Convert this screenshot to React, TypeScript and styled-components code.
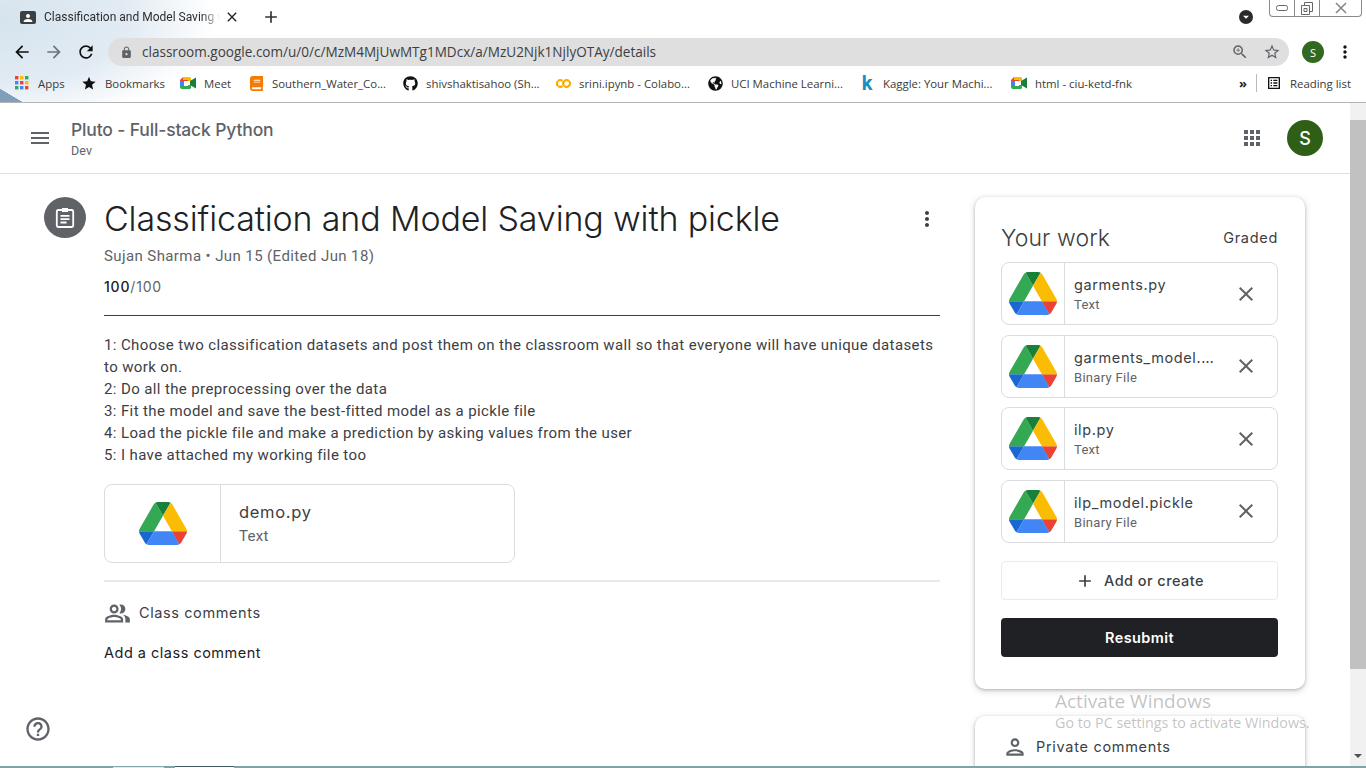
import React from 'react'
import styled, { createGlobalStyle } from 'styled-components'
import {
  MdAdd,
  MdApps,
  MdArrowBack,
  MdArrowDropDown,
  MdArrowForward,
  MdClose,
  MdHelpOutline,
  MdLock,
  MdMenu,
  MdMoreVert,
  MdOutlineListAlt,
  MdOutlinePeopleAlt,
  MdOutlinePerson,
  MdOutlineStarBorder,
  MdRefresh,
  MdStar,
  MdZoomIn,
} from 'react-icons/md'
import { FaBook, FaGithub, FaGlobeAmericas } from 'react-icons/fa'
import { SiGooglecolab } from 'react-icons/si'

const sans = `Inter, "Open Sans", sans-serif`
const body = `Roboto, Arial, sans-serif`
const ui = `"Open Sans", "Noto Sans", sans-serif`

const GlobalStyle = createGlobalStyle`
  html, body {
    margin: 0;
    padding: 0;
    height: 100%;
    overflow: hidden;
    background: #fff;
  }
  * { box-sizing: border-box; }
`

const Page = styled.div`
  position: relative;
  display: flex;
  flex-direction: column;
  width: 1366px;
  height: 768px;
  overflow: hidden;
  background: #fff;
`

/* browser frame */
const BrowserFrame = styled.div`
  flex: none;
  height: 103px;
  border-bottom: 1px solid #b4b4b4;
  background:
    linear-gradient(to top right, #7f9fbd 50%, transparent 52%) 0 100% / 22px 13px no-repeat,
    radial-gradient(ellipse 215px 105px at 0 20px, #d6e4ee 0, #e2ebf3 60%, transparent 100%),
    #fff;
`

const TabStrip = styled.div`
  display: flex;
  align-items: center;
  height: 34px;
  padding-left: 20px;
`

const TabFavicon = styled.svg`
  flex: none;
  display: block;
`

const TabTitle = styled.div`
  width: 176px;
  margin-left: 8px;
  overflow: hidden;
  white-space: nowrap;
  font: 12px ${body};
  color: #2d2d2d;
  -webkit-mask-image: linear-gradient(90deg, #000 90%, transparent 100%);
  mask-image: linear-gradient(90deg, #000 90%, transparent 100%);
`

const TabClose = styled.div`
  display: flex;
  margin-left: 4px;
  color: #222;
  font-size: 16px;
`

const NewTab = styled.div`
  display: flex;
  margin-left: 21px;
  color: #333;
  font-size: 20px;
`

const TabSpacer = styled.div`
  flex: 1;
`

const ProfileDrop = styled.div`
  display: flex;
  align-items: center;
  justify-content: center;
  width: 14px;
  height: 14px;
  margin-right: 16px;
  border-radius: 50%;
  background: #2b2b2b;
  color: #fff;
  font-size: 14px;
`

const WindowControls = styled.div`
  display: flex;
  align-self: flex-start;
  width: 93px;
  height: 17px;
  margin-right: 4px;
  border: 1px solid #8a8a8a;
  border-top: 0;
  border-radius: 0 0 4px 4px;
  background: #fff;
`

const WindowButton = styled.div<{ $width: number; $last?: boolean }>`
  display: flex;
  align-items: center;
  justify-content: center;
  width: ${props => props.$width}px;
  border-right: ${props => (props.$last ? '0' : '1px solid #8a8a8a')};
`

const Toolbar = styled.div`
  display: flex;
  align-items: center;
  height: 36px;
  padding-left: 12px;
`

const NavButton = styled.div<{ $muted?: boolean }>`
  display: flex;
  width: 20px;
  margin-right: 12px;
  color: ${props => (props.$muted ? '#6f7377' : '#111')};
  font-size: 20px;
`

const AddressBar = styled.div`
  display: flex;
  align-items: center;
  width: 1181px;
  height: 28px;
  padding-left: 12px;
  border-radius: 14px;
  background: #dfdfdf;
`

const LockIcon = styled.div`
  display: flex;
  color: #5f6368;
  font-size: 13px;
`

const UrlText = styled.div`
  flex: 1;
  margin-left: 9px;
  font: 13.55px ${ui};
  color: #3c4043;
`

const AddressAction = styled.div<{ $gap: number }>`
  display: flex;
  margin-right: ${props => props.$gap}px;
  color: #5f6368;
  font-size: 18px;
`

const ChromeAvatar = styled.div`
  display: flex;
  align-items: center;
  justify-content: center;
  width: 22px;
  height: 22px;
  margin-left: 13px;
  border-radius: 50%;
  background: #33691e;
  color: #fff;
  font: 11px ${ui};
`

const ChromeMenu = styled.div`
  display: flex;
  margin-left: 11px;
  color: #111;
  font-size: 20px;
`

const BookmarkBar = styled.div`
  display: flex;
  align-items: center;
  height: 28px;
  padding: 0 0 2px 14px;
`

const Bookmark = styled.div<{ $gap: number }>`
  display: flex;
  align-items: center;
  margin-right: ${props => props.$gap}px;
`

const BookmarkIcon = styled.div<{ $color?: string; $size?: number }>`
  display: flex;
  align-items: center;
  justify-content: center;
  width: 16px;
  height: 16px;
  color: ${props => props.$color || '#111'};
  font-size: ${props => props.$size || 15}px;
`

const KaggleMark = styled.span`
  font: 700 20px/16px ${body};
  color: #1b8fc2;
`

const BookmarkLabel = styled.div<{ $width: number }>`
  width: ${props => props.$width}px;
  margin-left: 8px;
  white-space: nowrap;
  font: 11.4px ${ui};
  color: #3a3a3a;
`

const BookmarkSpacer = styled.div`
  flex: 1;
`

const Chevrons = styled.div`
  font: 700 13px ${ui};
  color: #222;
`

const BarDivider = styled.div`
  width: 1px;
  height: 18px;
  margin: 0 9px 0 9px;
  background: #bbb;
`

const ColorDots = styled.svg`
  display: block;
`

/* classroom */
const ClassroomArea = styled.div`
  flex: 1;
  display: flex;
  min-height: 0;
`

const Content = styled.div`
  flex: 1;
  display: flex;
  flex-direction: column;
  min-width: 0;
`

const ClassHeader = styled.header`
  flex: none;
  display: flex;
  align-items: center;
  height: 71px;
  padding: 0 27px 0 28px;
  border-bottom: 1px solid #e0e0e0;
`

const HeaderMenu = styled.div`
  display: flex;
  color: #5f6368;
  font-size: 24px;
`

const ClassTitles = styled.div`
  flex: 1;
  margin-left: 19px;
  padding-top: 1px;
`

const ClassName = styled.div`
  font: 500 17.5px/22px ${sans};
  color: #5f6368;
  letter-spacing: -0.15px;
`

const ClassSection = styled.div`
  margin-top: 2px;
  font: 12.5px/16px ${body};
  color: #5f6368;
  letter-spacing: 0.1px;
`

const HeaderApps = styled.div`
  display: flex;
  color: #5f6368;
  font-size: 24px;
`

const HeaderAvatar = styled.div`
  display: flex;
  align-items: center;
  justify-content: center;
  width: 36px;
  height: 36px;
  margin-left: 23px;
  border-radius: 50%;
  background: #2f5f17;
  color: #fff;
  font: 500 18px ${sans};
`

const Columns = styled.div`
  flex: 1;
  display: flex;
  min-height: 0;
  padding: 23px 0 0 44px;
  overflow: hidden;
`

const AssignmentBadge = styled.div`
  flex: none;
  display: flex;
  align-items: center;
  justify-content: center;
  width: 42px;
  height: 41px;
  border-radius: 50%;
  background: #5f6368;
`

const Main = styled.main`
  flex: none;
  width: 836px;
  margin-left: 18px;
`

const TitleRow = styled.div`
  display: flex;
  align-items: center;
  justify-content: space-between;
  height: 44px;
`

const Title = styled.h1`
  margin: 0;
  font: 300 34px/44px ${sans};
  color: #202124;
  letter-spacing: -0.14px;
  white-space: nowrap;
`

const MoreButton = styled.div`
  display: flex;
  margin-right: 1px;
  color: #3c4043;
  font-size: 24px;
`

const Meta = styled.div`
  margin-top: 5px;
  font: 15px/20px ${body};
  color: #5f6368;
  letter-spacing: 0.4px;
`

const Points = styled.div`
  margin-top: 11px;
  padding-bottom: 18px;
  border-bottom: 1px solid #3c4043;
  font: 14px/20px ${sans};
  color: #5f6368;
  letter-spacing: 0.8px;
  strong {
    font-weight: 500;
    color: #202124;
  }
`

const Description = styled.div`
  margin-top: 18px;
  font: 15px/22px ${body};
  color: #3c4043;
  letter-spacing: 0.385px;
`

const AttachmentCard = styled.div<{ $large?: boolean }>`
  display: flex;
  width: ${props => (props.$large ? '411px' : '277px')};
  height: ${props => (props.$large ? '79px' : '63px')};
  border: 1px solid #dadce0;
  border-radius: 8px;
  background: #fff;
`

const DemoWrap = styled.div`
  margin-top: 18px;
`

const Thumb = styled.div<{ $large?: boolean }>`
  flex: none;
  display: flex;
  align-items: center;
  justify-content: center;
  width: ${props => (props.$large ? '116px' : '63px')};
  border-right: 1px solid #dadce0;
`

const FileInfo = styled.div<{ $large?: boolean }>`
  flex: 1;
  min-width: 0;
  padding-top: ${props => (props.$large ? '0' : '2px')};
  padding-left: ${props => (props.$large ? '18px' : '9px')};
  align-self: center;
`

const FileName = styled.div<{ $large?: boolean }>`
  font: 400 ${props => (props.$large ? '16.5px/22px' : '14.5px/20px')} ${sans};
  color: #3c4043;
  max-width: 142px;
  overflow: hidden;
  white-space: nowrap;
  text-overflow: ellipsis;
  letter-spacing: ${props => (props.$large ? '0.7px' : '0.6px')};
`

const FileType = styled.div<{ $large?: boolean }>`
  margin-top: ${props => (props.$large ? '2px' : '1px')};
  font: ${props => (props.$large ? '15px/22px' : '13px/18px')} ${body};
  color: #5f6368;
  letter-spacing: 0.3px;
`

const RemoveButton = styled.div`
  flex: none;
  display: flex;
  align-self: center;
  margin-right: 19px;
  color: #5f6368;
  font-size: 24px;
`

const SoftRule = styled.div`
  height: 2px;
  margin-top: 17px;
  background: #e8eaed;
`

const CommentsHeading = styled.div`
  display: flex;
  align-items: center;
  margin-top: 18px;
  height: 26px;
  font: 400 14.5px/20px ${sans};
  color: #3c4043;
  letter-spacing: 0.6px;
`

const CommentsIcon = styled.div`
  display: flex;
  width: 35px;
  color: #5f6368;
  font-size: 27px;
`

const AddComment = styled.div`
  margin-top: 17px;
  font: 400 14.5px/20px ${sans};
  color: #202124;
  letter-spacing: 0.5px;
`

const Sidebar = styled.aside`
  flex: none;
  width: 330px;
  margin-left: 35px;
`

const Card = styled.section`
  border-radius: 10px;
  background: #fff;
  box-shadow: 0 1px 3px rgba(60, 64, 67, 0.3), 0 2px 6px 1px rgba(60, 64, 67, 0.15);
`

const WorkCard = styled(Card)`
  height: 492px;
  padding: 21px 27px 0 26px;
`

const CommentsCard = styled(Card)`
  display: flex;
  align-items: center;
  height: 70px;
  margin-top: 27px;
  padding: 0 0 8px 27px;
  font: 400 14.5px/20px ${sans};
  color: #3c4043;
  letter-spacing: 0.7px;
`

const PersonIcon = styled.div`
  display: flex;
  width: 34px;
  color: #5f6368;
  font-size: 26px;
`

const WorkHeader = styled.div`
  display: flex;
  align-items: center;
  justify-content: space-between;
  height: 40px;
  margin-bottom: 4px;
`

const WorkTitle = styled.div`
  font: 300 23px/28px ${sans};
  color: #3c4043;
  letter-spacing: 0.1px;
`

const WorkStatus = styled.div`
  font: 400 14.5px/20px ${sans};
  color: #3c4043;
  letter-spacing: 0.7px;
`

const WorkList = styled.div`
  display: flex;
  flex-direction: column;
  gap: 9.5px;
`

const AddButton = styled.div`
  display: flex;
  align-items: center;
  justify-content: center;
  height: 39px;
  margin-top: 18.5px;
  border: 1px solid #e8eaed;
  border-radius: 4px;
  font: 500 14.5px/20px ${sans};
  color: #3c4043;
  letter-spacing: 0.45px;
`

const AddIcon = styled.div`
  display: flex;
  margin-right: 9px;
  color: #3c4043;
  font-size: 20px;
`

const ResubmitButton = styled.div`
  display: flex;
  align-items: center;
  justify-content: center;
  height: 39px;
  margin-top: 18px;
  border-radius: 4px;
  background: #202124;
  color: #fff;
  font: 600 14.5px/20px ${sans};
  letter-spacing: 0.4px;
`

const Scrollbar = styled.div`
  flex: none;
  position: relative;
  width: 16px;
  padding-top: 17px;
  background: #f1f1f1;
`

const ScrollThumb = styled.div`
  height: 549px;
  background: #c1c1c1;
`

const ScrollArrow = styled.div`
  position: absolute;
  left: 4px;
  bottom: 8px;
  width: 0;
  height: 0;
  border: 4px solid transparent;
  border-top: 4px solid #505050;
  border-bottom: 0;
`

const HelpButton = styled.div`
  position: absolute;
  left: 24px;
  top: 715px;
  display: flex;
  color: #5f6368;
  font-size: 28px;
`

const Watermark = styled.div`
  position: absolute;
  left: 1055px;
  top: 689px;
  font-family: ${ui};
  color: rgba(120, 120, 120, 0.45);
  pointer-events: none;
`

const WatermarkTitle = styled.div`
  font-size: 19px;
  line-height: 24px;
`

const WatermarkSub = styled.div`
  font-size: 14.3px;
  line-height: 20px;
  white-space: nowrap;
`

const TaskbarEdge = styled.div`
  flex: none;
  display: flex;
  height: 2px;
  padding-left: 113px;
  background: #7fa3a9;
`

const TaskbarSlot = styled.div<{ $width: number; $gap: number; $active?: boolean }>`
  width: ${props => props.$width}px;
  margin-right: ${props => props.$gap}px;
  border-top: 1px solid ${props => (props.$active ? '#44595e' : '#8aa6ac')};
  background: ${props => (props.$active ? '#fff' : '#dfe8ea')};
`

const DriveIcon: React.FC = () => (
  <svg width="48" height="43" viewBox="0 0 87.3 78" aria-hidden="true">
    <path d="m6.6 66.85 3.85 6.65c.8 1.4 1.95 2.5 3.3 3.3l13.75-23.8h-27.5c0 1.55.4 3.1 1.2 4.5z" fill="#1967d2" />
    <path d="m43.65 25-13.75-23.8c-1.35.8-2.5 1.9-3.3 3.3l-25.4 44a9.06 9.06 0 0 0 -1.2 4.5h27.5z" fill="#34a853" />
    <path d="m73.55 76.8c1.35-.8 2.5-1.9 3.3-3.3l1.6-2.75 7.65-13.25c.8-1.4 1.2-2.95 1.2-4.5h-27.502l5.852 11.5z" fill="#ea4335" />
    <path d="m43.65 25 13.75-23.8c-1.35-.8-2.9-1.2-4.5-1.2h-18.5c-1.6 0-3.15.45-4.5 1.2z" fill="#188038" />
    <path d="m59.8 53h-32.3l-13.75 23.8c1.35.8 2.9 1.2 4.5 1.2h50.8c1.6 0 3.15-.45 4.5-1.2z" fill="#4285f4" />
    <path d="m73.4 26.5-12.7-22c-.8-1.4-1.95-2.5-3.3-3.3l-13.75 23.8 16.15 28h27.45c0-1.55-.4-3.1-1.2-4.5z" fill="#fbbc04" />
  </svg>
)

const MeetIcon: React.FC = () => (
  <svg width="16" height="14" viewBox="0 0 16 14" aria-hidden="true">
    <path d="M3 1h7v4H4v1H0V4z" fill="#ea4335" />
    <path d="M0 5h4v4H0z" fill="#4285f4" />
    <path d="M0 9h4v1h6v3H2a2 2 0 0 1-2-2z" fill="#34a853" />
    <path d="M3 1h6.500A1.500 1.500 0 0 1 11 2.500V5H8V4H3z" fill="#fbbc04" />
    <path d="M10 5 16 1.500v11L10 9z" fill="#188038" />
    <path d="M8 9h3v2.500A1.500 1.500 0 0 1 9.500 13H8z" fill="#34a853" />
  </svg>
)

const AppsDots: React.FC = () => {
  const colors = ['#ea4335', '#fbbc04', '#34a853', '#4285f4', '#ea4335', '#fbbc04', '#34a853', '#4285f4', '#ea4335']
  return (
    <ColorDots width="14" height="14" viewBox="0 0 14 14" aria-hidden="true">
      {colors.map((color, i) => (
        <rect key={i} x={(i % 3) * 5} y={Math.floor(i / 3) * 5} width="3.4" height="3.4" fill={color} />
      ))}
    </ColorDots>
  )
}

const AssignmentIcon: React.FC = () => (
  <svg width="24" height="24" viewBox="0 0 24 24" fill="none" aria-hidden="true">
    <rect x="3.8" y="4" width="16.4" height="17" rx="1.4" stroke="#fff" strokeWidth="1.8" />
    <path d="M9 2h6v4H9z" fill="#fff" />
    <path d="M7.5 9h9v1.8h-9zM7.5 12.3h9v1.8h-9zM7.5 15.6h6v1.8h-6z" fill="#fff" />
  </svg>
)

const Attachment: React.FC<{ name: string; type: string }> = ({ name, type }) => (
  <AttachmentCard>
    <Thumb>
      <DriveIcon />
    </Thumb>
    <FileInfo>
      <FileName>{name}</FileName>
      <FileType>{type}</FileType>
    </FileInfo>
    <RemoveButton>
      <MdClose />
    </RemoveButton>
  </AttachmentCard>
)

const work = [
  { name: 'garments.py', type: 'Text' },
  { name: 'garments_model.pickle', type: 'Binary File' },
  { name: 'ilp.py', type: 'Text' },
  { name: 'ilp_model.pickle', type: 'Binary File' },
]

const App: React.FC = () => (
  <Page>
    <GlobalStyle />
    <BrowserFrame>
      <TabStrip>
        <TabFavicon width="16" height="13" viewBox="0 0 16 13" aria-hidden="true">
          <rect width="16" height="13" rx="2" fill="#3c4043" />
          <circle cx="8" cy="5" r="2" fill="#fff" />
          <path d="M3.500 11c0-2 2-3 4.500-3s4.500 1 4.500 3z" fill="#fff" />
        </TabFavicon>
        <TabTitle>Classification and Model Saving with pickle</TabTitle>
        <TabClose>
          <MdClose />
        </TabClose>
        <NewTab>
          <MdAdd />
        </NewTab>
        <TabSpacer />
        <ProfileDrop>
          <MdArrowDropDown />
        </ProfileDrop>
        <WindowControls>
          <WindowButton $width={25}>
            <svg width="12" height="6" viewBox="0 0 12 6" aria-hidden="true">
              <rect x="0.5" y="0.5" width="11" height="5" rx="2" fill="none" stroke="#666" />
            </svg>
          </WindowButton>
          <WindowButton $width={25}>
            <svg width="12" height="13" viewBox="0 0 12 13" aria-hidden="true">
              <path d="M3.500 3V.5h8v9H9M.5 3.500h8v9h-8zM3 6.500h3v3H3z" fill="none" stroke="#666" />
            </svg>
          </WindowButton>
          <WindowButton $width={41} $last>
            <svg width="12" height="12" viewBox="0 0 12 12" aria-hidden="true">
              <path d="M1 1l10 10M11 1 1 11" stroke="#888" strokeWidth="1.6" fill="none" />
            </svg>
          </WindowButton>
        </WindowControls>
      </TabStrip>
      <Toolbar>
        <NavButton>
          <MdArrowBack />
        </NavButton>
        <NavButton $muted>
          <MdArrowForward />
        </NavButton>
        <NavButton>
          <MdRefresh />
        </NavButton>
        <AddressBar>
          <LockIcon>
            <MdLock />
          </LockIcon>
          <UrlText>classroom.google.com/u/0/c/MzM4MjUwMTg1MDcx/a/MzU2Njk1NjlyOTAy/details</UrlText>
          <AddressAction $gap={14}>
            <MdZoomIn />
          </AddressAction>
          <AddressAction $gap={8}>
            <MdOutlineStarBorder />
          </AddressAction>
        </AddressBar>
        <ChromeAvatar>S</ChromeAvatar>
        <ChromeMenu>
          <MdMoreVert />
        </ChromeMenu>
      </Toolbar>
      <BookmarkBar>
        <Bookmark $gap={15}>
          <BookmarkIcon>
            <AppsDots />
          </BookmarkIcon>
          <BookmarkLabel $width={28}>Apps</BookmarkLabel>
        </Bookmark>
        <Bookmark $gap={15}>
          <BookmarkIcon $size={17}>
            <MdStar />
          </BookmarkIcon>
          <BookmarkLabel $width={60}>Bookmarks</BookmarkLabel>
        </Bookmark>
        <Bookmark $gap={16}>
          <BookmarkIcon>
            <MeetIcon />
          </BookmarkIcon>
          <BookmarkLabel $width={28}>Meet</BookmarkLabel>
        </Bookmark>
        <Bookmark $gap={16}>
          <BookmarkIcon $color="#f57c00">
            <FaBook />
          </BookmarkIcon>
          <BookmarkLabel $width={114}>Southern_Water_Co...</BookmarkLabel>
        </Bookmark>
        <Bookmark $gap={16}>
          <BookmarkIcon>
            <FaGithub />
          </BookmarkIcon>
          <BookmarkLabel $width={113}>shivshaktisahoo (Sh...</BookmarkLabel>
        </Bookmark>
        <Bookmark $gap={15}>
          <BookmarkIcon $color="#f9ab00">
            <SiGooglecolab />
          </BookmarkIcon>
          <BookmarkLabel $width={113}>srini.ipynb - Colabo...</BookmarkLabel>
        </Bookmark>
        <Bookmark $gap={15}>
          <BookmarkIcon>
            <FaGlobeAmericas />
          </BookmarkIcon>
          <BookmarkLabel $width={113}>UCI Machine Learni...</BookmarkLabel>
        </Bookmark>
        <Bookmark $gap={16}>
          <BookmarkIcon>
            <KaggleMark>k</KaggleMark>
          </BookmarkIcon>
          <BookmarkLabel $width={112}>Kaggle: Your Machi...</BookmarkLabel>
        </Bookmark>
        <Bookmark $gap={0}>
          <BookmarkIcon>
            <MeetIcon />
          </BookmarkIcon>
          <BookmarkLabel $width={102}>html - ciu-ketd-fnk</BookmarkLabel>
        </Bookmark>
        <BookmarkSpacer />
        <Chevrons>»</Chevrons>
        <BarDivider />
        <Bookmark $gap={14}>
          <BookmarkIcon $size={18}>
            <MdOutlineListAlt />
          </BookmarkIcon>
          <BookmarkLabel $width={62}>Reading list</BookmarkLabel>
        </Bookmark>
      </BookmarkBar>
    </BrowserFrame>

    <ClassroomArea>
      <Content>
        <ClassHeader>
          <HeaderMenu>
            <MdMenu />
          </HeaderMenu>
          <ClassTitles>
            <ClassName>Pluto - Full-stack Python</ClassName>
            <ClassSection>Dev</ClassSection>
          </ClassTitles>
          <HeaderApps>
            <MdApps />
          </HeaderApps>
          <HeaderAvatar>S</HeaderAvatar>
        </ClassHeader>
        <Columns>
          <AssignmentBadge>
            <AssignmentIcon />
          </AssignmentBadge>
          <Main>
            <TitleRow>
              <Title>Classification and Model Saving with pickle</Title>
              <MoreButton>
                <MdMoreVert />
              </MoreButton>
            </TitleRow>
            <Meta>Sujan Sharma • Jun 15 (Edited Jun 18)</Meta>
            <Points>
              <strong>100</strong>/100
            </Points>
            <Description>
              1: Choose two classification datasets and post them on the classroom wall so that everyone will have unique datasets to work on.
              <br />
              2: Do all the preprocessing over the data
              <br />
              3: Fit the model and save the best-fitted model as a pickle file
              <br />
              4: Load the pickle file and make a prediction by asking values from the user
              <br />
              5: I have attached my working file too
            </Description>
            <DemoWrap>
              <AttachmentCard $large>
                <Thumb $large>
                  <DriveIcon />
                </Thumb>
                <FileInfo $large>
                  <FileName $large>demo.py</FileName>
                  <FileType $large>Text</FileType>
                </FileInfo>
              </AttachmentCard>
            </DemoWrap>
            <SoftRule />
            <CommentsHeading>
              <CommentsIcon>
                <MdOutlinePeopleAlt />
              </CommentsIcon>
              Class comments
            </CommentsHeading>
            <AddComment>Add a class comment</AddComment>
          </Main>
          <Sidebar>
            <WorkCard>
              <WorkHeader>
                <WorkTitle>Your work</WorkTitle>
                <WorkStatus>Graded</WorkStatus>
              </WorkHeader>
              <WorkList>
                {work.map(file => (
                  <Attachment key={file.name} name={file.name} type={file.type} />
                ))}
              </WorkList>
              <AddButton>
                <AddIcon>
                  <MdAdd />
                </AddIcon>
                Add or create
              </AddButton>
              <ResubmitButton>Resubmit</ResubmitButton>
            </WorkCard>
            <CommentsCard>
              <PersonIcon>
                <MdOutlinePerson />
              </PersonIcon>
              Private comments
            </CommentsCard>
          </Sidebar>
        </Columns>
      </Content>
      <Scrollbar>
        <ScrollThumb />
        <ScrollArrow />
      </Scrollbar>
    </ClassroomArea>
    <TaskbarEdge>
      <TaskbarSlot $width={51} $gap={11} />
      <TaskbarSlot $width={59} $gap={0} $active />
    </TaskbarEdge>

    <HelpButton>
      <MdHelpOutline />
    </HelpButton>
    <Watermark>
      <WatermarkTitle>Activate Windows</WatermarkTitle>
      <WatermarkSub>Go to PC settings to activate Windows.</WatermarkSub>
    </Watermark>
  </Page>
)

export default App
